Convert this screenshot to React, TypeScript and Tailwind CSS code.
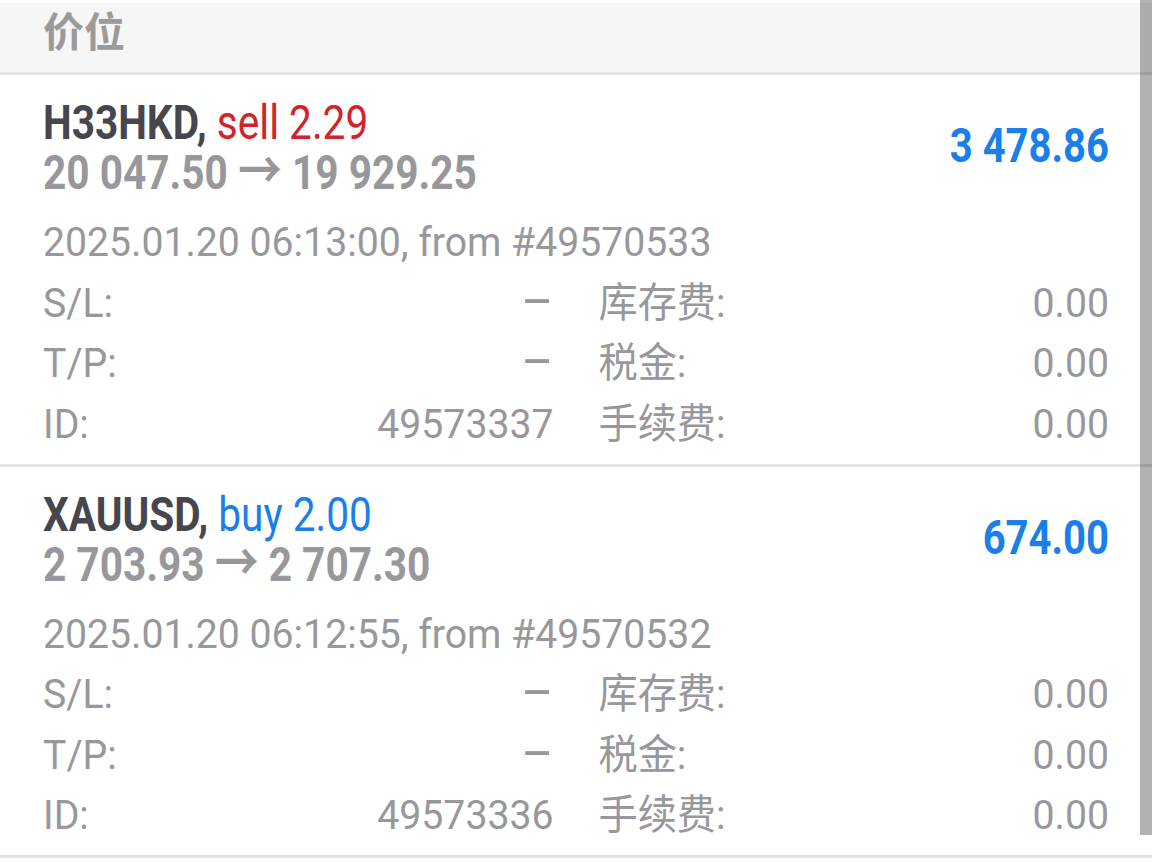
const deals = [
  {
    symbol: 'H33HKD',
    side: 'sell 2.29',
    sideColor: 'text-[#d2232a]',
    prices: ['20 047.50', '19 929.25'],
    profit: '3 478.86',
    time: '2025.01.20 06:13:00, from #49570533',
    id: '49573337',
  },
  {
    symbol: 'XAUUSD',
    side: 'buy 2.00',
    sideColor: 'text-[#1a7fea]',
    prices: ['2 703.93', '2 707.30'],
    profit: '674.00',
    time: '2025.01.20 06:12:55, from #49570532',
    id: '49573336',
  },
];

function Field({ label, value }: { label: string; value: string }) {
  return (
    <div className="flex scale-y-[1.05] items-center justify-between">
      <span>{label}</span>
      {value === '–' ? (
        <span className="text-[49px] leading-[0]">–</span>
      ) : (
        <span>{value}</span>
      )}
    </div>
  );
}

function DealCard({ deal }: { deal: (typeof deals)[number] }) {
  return (
    <section className="border-b-[3px] border-[#e3e3e3] px-[43px] pt-[22px] pb-[9.5px]">
      <div className="flex items-center justify-between">
        <div className="text-[40.6px] leading-[50px]">
          <div className="scale-y-[1.18]">
            <span className="font-bold text-[#46464e]">{deal.symbol},</span>{' '}
            <span className={deal.sideColor}>{deal.side}</span>
          </div>
          <div className="scale-y-[1.18] font-bold text-[#98989c]">
            {deal.prices[0]} <span className="text-[44px] leading-[0]">→</span> {deal.prices[1]}
          </div>
        </div>
        <div className="scale-y-[1.18] text-[40px] leading-[50px] font-bold text-[#1a7fea]">{deal.profit}</div>
      </div>

      <div className="mt-[15px] text-[39.2px] leading-[60.5px] text-[#98989c]">
        <div className="scale-y-[1.05]">{deal.time}</div>
        <div className="grid grid-cols-2 gap-x-[45px]">
          <Field label="S/L:" value="–" />
          <Field label="库存费:" value="0.00" />
          <Field label="T/P:" value="–" />
          <Field label="税金:" value="0.00" />
          <Field label="ID:" value={deal.id} />
          <Field label="手续费:" value="0.00" />
        </div>
      </div>
    </section>
  );
}

export default function App() {
  return (
    <div className="relative h-[862px] w-[1152px] overflow-hidden bg-white font-['Roboto','Noto_Sans_CJK_SC',sans-serif]">
      <header className="mt-[3px] flex h-[72px] items-center border-b-[3px] border-[#e3e3e3] bg-[#f6f6f6] px-[43px] pb-[8px]">
        <h1 className="text-[41px] font-bold text-[#9a9a9a]">价位</h1>
      </header>

      {deals.map((deal) => (
        <DealCard key={deal.symbol} deal={deal} />
      ))}

      <div className="absolute top-0 right-0 h-[835px] w-[12px] bg-black/30" />
    </div>
  );
}
